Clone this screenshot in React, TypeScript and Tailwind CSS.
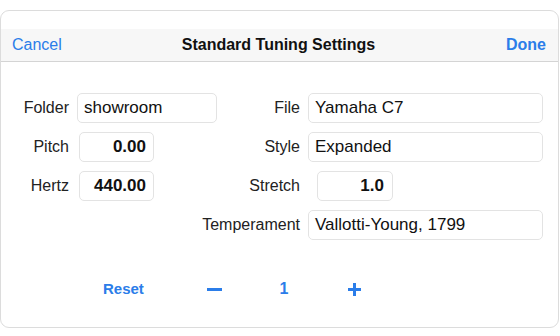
import { useState } from "react";

const inputBox =
  "h-[30px] border border-[#e3e3e3] rounded-[5px] bg-white flex items-center text-[17px] text-[#111]";

const Label = ({ children, pr }: { children: string; pr: string }) => (
  <div className={`flex items-center justify-end text-[16px] text-[#222] ${pr}`}>{children}</div>
);

export default function App() {
  const [count, setCount] = useState(1);

  return (
    <div className="w-[560px] h-[336px] bg-white pt-[10px] font-['Liberation_Sans',Arial,sans-serif]">
      <div className="w-[559px] h-[318px] border border-[#dcdcdc] rounded-[9px] bg-white overflow-hidden">
        <div className="mt-[18px] h-[33px] bg-[#f7f7f7] border-b border-[#d4d4d4] grid grid-cols-[1fr_auto_1fr] items-center px-[11px]">
          <button className="text-[16px] text-[#2b7de9] justify-self-start">Cancel</button>
          <div className="text-[16px] font-bold text-[#111] mr-[2px]">Standard Tuning Settings</div>
          <button className="text-[16px] font-bold text-[#2b7de9] justify-self-end mr-[1px]">Done</button>
        </div>

        <div className="mt-[31px] grid grid-cols-[76px_140px_91px_235px] gap-y-[9px]">
          <Label pr="pr-[8px]">Folder</Label>
          <div className={`${inputBox} px-[6px]`}>showroom</div>
          <Label pr="pr-[8px]">File</Label>
          <div className={`${inputBox} px-[6px]`}>Yamaha C7</div>

          <Label pr="pr-[8px]">Pitch</Label>
          <div>
            <div className={`${inputBox} ml-[2px] w-[75px] justify-end pr-[7px] font-bold`}>0.00</div>
          </div>
          <Label pr="pr-[8px]">Style</Label>
          <div className={`${inputBox} px-[6px]`}>Expanded</div>

          <Label pr="pr-[8px]">Hertz</Label>
          <div>
            <div className={`${inputBox} ml-[2px] w-[75px] justify-end pr-[7px] font-bold`}>440.00</div>
          </div>
          <Label pr="pr-[8px]">Stretch</Label>
          <div>
            <div className={`${inputBox} ml-[9px] w-[76px] justify-end pr-[8px] font-bold`}>1.0</div>
          </div>

          <div />
          <div />
          <Label pr="pr-[8px]">Temperament</Label>
          <div className={`${inputBox} px-[6px]`}>Vallotti-Young, 1799</div>
        </div>

        <div className="mt-[37px] h-[24px] flex items-center text-[#2b7de9]">
          <button className="ml-[102px] w-[42px] text-[15px] font-bold text-left">Reset</button>
          <button
            className="ml-[62px] w-[15px] h-[20px] flex items-center justify-center"
            onClick={() => setCount(Math.max(1, count - 1))}
          >
            <svg width="15" height="3" viewBox="0 0 15 3">
              <rect x="0" y="0" width="15" height="3" fill="#2b7de9" />
            </svg>
          </button>
          <div className="ml-[57px] w-[10px] text-[16px] font-bold text-center">{count}</div>
          <button
            className="ml-[59px] w-[13px] h-[20px] flex items-center justify-center"
            onClick={() => setCount(count + 1)}
          >
            <svg width="13" height="13" viewBox="0 0 13 13">
              <rect x="0" y="5" width="13" height="3" fill="#2b7de9" />
              <rect x="5" y="0" width="3" height="13" fill="#2b7de9" />
            </svg>
          </button>
        </div>
      </div>
    </div>
  );
}
